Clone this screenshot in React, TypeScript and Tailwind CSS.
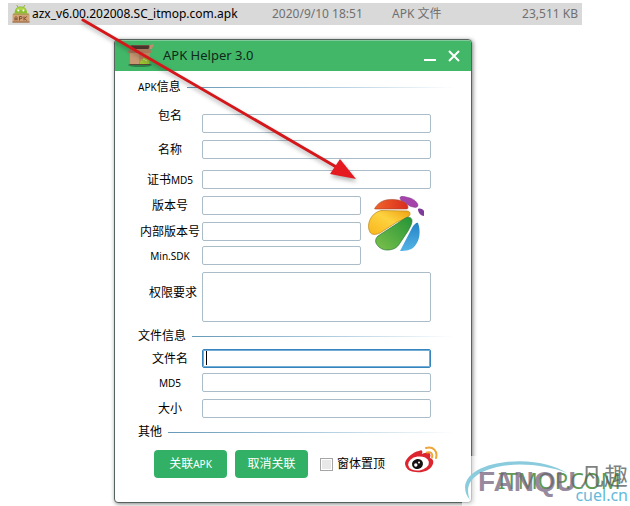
import type { ReactNode } from 'react';

function ApkFileIcon() {
  return (
    <svg width="18" height="18" viewBox="0 0 18 18" aria-hidden="true">
      <path d="M5 .5 6.200 2.400M12.600.5l-1.200 1.900" stroke="#8cab2e" strokeWidth="1" strokeLinecap="round" />
      <path d="M2.500 9C2.500 4 5 1.600 8.800 1.600S15.200 4 15.200 9z" fill="#8cc030" />
      <path d="M3.800 5C5 2.900 6.600 2.300 8.800 2.300s3.900.7 5 2.700z" fill="#b0d34b" />
      <circle cx="6.300" cy="5.500" r="1" fill="#fff" />
      <circle cx="11.400" cy="5.500" r="1" fill="#fff" />
      <path d="M1.500 8.500h15L17.500 10v7.500H.5V10z" fill="#d3a277" />
      <path d="M1.500 8.500h15l1 1.500H.5z" fill="#a9a052" />
      <path d="M.5 17h17" stroke="#92603b" />
      <path
        d="M3 15.500V12.500l1-1 1 1v3M3 14h2M7.500 15.500v-4H9c1.400 0 1.400 2.200 0 2.200H7.500M12 11.500v4M14.800 11.500 12.400 13.500l2.400 2"
        fill="none"
        stroke="#7c4f32"
        strokeWidth="1"
      />
    </svg>
  );
}

function BoxIcon() {
  return (
    <svg width="28" height="24" viewBox="0 0 28 24" aria-hidden="true">
      <ellipse cx="13" cy="21" rx="12" ry="2" fill="#2b8049" />
      <path d="M2 4 4 1h18l2 4z" fill="#714b3b" />
      <path d="M5 2h17l-1 3H4z" fill="#49342c" />
      <path d="M3 6h20v14l-2 1H4l-1-1z" fill="#b98863" />
      <path d="M3 6h9v15H4l-1-1z" fill="#c79872" />
      <path d="M0 9 3 5h20l2 4z" fill="#a9795a" />
      <path d="m22 5 1-4 4-1-2 5z" fill="#bb8e6d" />
      <path d="M3 20.500h20" stroke="#5c4636" />
      <path d="M13 20c0-3 1-5 3-5l2-2c3 0 5 3 4 7z" fill="#9ac331" />
      <path d="M16 15c2 0 2 2 4 2" stroke="#dceb91" fill="none" />
    </svg>
  );
}

function PetalLogo() {
  return (
    <svg width="58" height="58" viewBox="0 2 58 58" className="shrink-0" aria-hidden="true">
      <defs>
        <linearGradient id="red" x1="0" y1="0" x2="1" y2="0">
          <stop stopColor="#f0652c" />
          <stop offset="1" stopColor="#d92c1d" />
        </linearGradient>
        <linearGradient id="yellow" x1="0" y1="1" x2="1" y2="0">
          <stop stopColor="#f9b51d" />
          <stop offset=".55" stopColor="#fdd33f" />
          <stop offset="1" stopColor="#eea012" />
        </linearGradient>
        <linearGradient id="green" x1="0" y1="1" x2="1" y2="0">
          <stop stopColor="#7dc14b" />
          <stop offset="1" stopColor="#239437" />
        </linearGradient>
        <linearGradient id="blue" x1="0" y1="0" x2="0" y2="1">
          <stop stopColor="#2383c6" />
          <stop offset="1" stopColor="#55b4e5" />
        </linearGradient>
      </defs>
      <path d="M8 14C12 7 20 4 31 6c6 1 10 3 10 8 0 1-2 1-4 1H9c-1 0-2 0-1-1z" fill="url(#red)" stroke="#a54525" strokeWidth=".6" />
      <path
        d="M14 16.500 40 17c3 0 4 3 2 5-3 3-8 4-12 6L13 39c-4 2-9 2-10-1-4-6 0-19 11-21.500z"
        fill="url(#yellow)"
        stroke="#bc871a"
        strokeWidth=".7"
      />
      <path
        d="M11 42 37 25c4-3 8-2 8 2 0 3-2 6-4 10L33 49c-3 5-7 7-13 7-5 0-9-3-11-7-1-3 0-5 2-7z"
        fill="url(#green)"
        stroke="#287737"
        strokeWidth=".7"
      />
      <path d="M33 57 45 34c2-4 5-6 6-5 3 8 2 18-4 24-3 3-8 4-14 4z" fill="url(#blue)" />
      <path d="M33 4c0-2 3-2 6-1 6 1 11 4 12 8 0 2-2 3-5 2-3 0-6-3-8-5-3-1-5-2-5-4z" fill="#a444aa" stroke="#813886" strokeWidth=".5" />
      <path d="M51 15c2-1 5 0 6 2v5c-3 0-6-3-6-7z" fill="#7f3b98" />
    </svg>
  );
}

function WeiboIcon() {
  return (
    <svg width="34" height="28" viewBox="0 0 34 28" aria-hidden="true">
      <path
        d="M14 5c3-2 4 0 3 3 4-2 8-2 8 0 1 1 0 3 0 4 4 1 4 5 2 8-3 5-10 7-16 6C4 26 0 22 0 17 1 12 8 6 14 5z"
        fill="#dc252e"
      />
      <ellipse cx="13.500" cy="17.500" rx="10.500" ry="7" fill="#fff" transform="rotate(-8 13.500 17.500)" />
      <ellipse cx="12.500" cy="18" rx="5.500" ry="5" fill="#161212" transform="rotate(-15 12.500 18)" />
      <circle cx="10.800" cy="19" r="1.700" fill="#fff" />
      <circle cx="14" cy="16.500" r="1" fill="#fff" />
      <path d="M21 2c7-2 12 3 10 10M22 6.500c4-1 6 1 5 5" fill="none" stroke="#eea637" strokeWidth="2" strokeLinecap="round" />
    </svg>
  );
}

// Latin runs are set smaller than the Chinese beside them
function Latin({ children }: { children: ReactNode }) {
  return <span className="text-[10px]">{children}</span>;
}

function Section({ title, children }: { title: ReactNode; children: ReactNode }) {
  return (
    <section>
      <div className="flex h-5 items-center gap-1.5">
        <h2>{title}</h2>
        <div className="h-px flex-1 bg-gradient-to-r from-[#6699b5] via-[#a9c9dd] to-transparent" />
      </div>
      {children}
    </section>
  );
}

type FieldProps = { id: string; label: ReactNode; className?: string; labelClass?: string; focused?: boolean };

function Field({ id, label, className = '', labelClass = '', focused }: FieldProps) {
  const border = focused ? 'border-[#3584bd] ring-1 ring-inset ring-[#73add6]' : 'border-[#a9bcc8]';
  return (
    <div className={`flex items-center ${className}`}>
      <label htmlFor={id} className={`w-16 shrink-0 text-center whitespace-nowrap ${labelClass}`}>
        {label}
      </label>
      <div className="relative flex-1">
        <input id={id} className={`block h-[19px] w-full rounded-[2px] border bg-white px-1 outline-none ${border}`} />
        {focused && <span className="absolute top-0.5 left-1 h-3.5 w-px bg-black" />}
      </div>
    </div>
  );
}

function HelperWindow() {
  return (
    <div className="w-full max-w-[358px] overflow-hidden rounded-[4px] border border-[#56635c] bg-white shadow-[1px_1px_4px_rgba(0,0,0,0.5)]">
      <header className="flex h-[31px] items-center border-t border-[#80ca9a] bg-[#42b768] pr-[7px] pl-3">
        <BoxIcon />
        <h1 className="ml-2 flex-1 text-[13px] text-[#102a19]">APK Helper 3.0</h1>
        <button type="button" aria-label="Minimize" className="flex h-5 w-5 items-end justify-center">
          <svg width="14" height="8" viewBox="0 0 14 8">
            <path d="M1 2h12" stroke="#fff" strokeWidth="2" />
          </svg>
        </button>
        <button type="button" aria-label="Close" className="ml-1 flex h-5 w-5 items-center justify-center">
          <svg width="12" height="12" viewBox="0 0 12 12">
            <path d="m1 1 10 10M11 1 1 11" stroke="#fff" strokeWidth="2" />
          </svg>
        </button>
      </header>

      <form className="pt-1.5 pr-4 pb-5 pl-[23px] text-[12px] leading-[18px] text-black">
        <Section title={<><Latin>APK</Latin>信息</>}>
          <div className="pt-2.5 pr-6">
            <Field id="package" label="包名" className="h-[26px] items-end" labelClass="self-start" />
            <Field id="name" label="名称" className="mt-[7px]" />
            <Field id="cert" label={<>证书<Latin>MD5</Latin></>} className="mt-[11px]" />
            <div className="mt-[7px] flex gap-1.5">
              <div className="w-[223px]">
                <Field id="version" label="版本号" />
                <Field id="build" label="内部版本号" className="mt-[7px]" />
                <Field id="sdk" label={<Latin>Min.SDK</Latin>} className="mt-[5px]" />
              </div>
              <PetalLogo />
            </div>
            <div className="mt-[7px] flex items-center">
              <label htmlFor="permissions" className="w-16 shrink-0 pb-2 pl-1.5 text-center">
                权限要求
              </label>
              <textarea
                id="permissions"
                className="block h-[50px] flex-1 resize-none rounded-[2px] border border-[#a9bcc8] bg-white outline-none"
              />
            </div>
          </div>
        </Section>

        <div className="mt-1">
          <Section title="文件信息">
            <div className="pt-[3px] pr-6">
              <Field id="file" label="文件名" focused />
              <Field id="md5" label={<Latin>MD5</Latin>} className="mt-[5px]" />
              <Field id="size" label="大小" className="mt-[7px]" />
            </div>
          </Section>
        </div>

        <div className="mt-1">
          <Section title="其他">
            <div className="flex items-center pt-1 pl-4">
              <button type="button" className="h-7 w-[73px] rounded-[4px] bg-[#32b166] text-white">
                关联<Latin>APK</Latin>
              </button>
              <button type="button" className="ml-2 h-7 w-[73px] rounded-[4px] bg-[#32b166] text-white">
                取消关联
              </button>
              <label className="ml-3 flex items-center gap-1">
                <input
                  type="checkbox"
                  className="h-[13px] w-[13px] appearance-none border border-[#a5a5a5] bg-[#e8e8e8] shadow-[inset_0_0_0_1px_white]"
                />
                窗体置顶
              </label>
              <a href="#weibo" aria-label="Weibo" className="mb-2 ml-5">
                <WeiboIcon />
              </a>
            </div>
          </Section>
        </div>
      </form>
    </div>
  );
}

function Arrow() {
  return (
    <svg
      width="380"
      height="200"
      viewBox="0 0 380 200"
      className="pointer-events-none absolute top-0 left-0 drop-shadow-[1px_3px_2px_rgba(0,0,0,0.3)]"
      aria-hidden="true"
    >
      <path d="M83 20 338 168" stroke="#d4171b" strokeWidth="3" strokeLinecap="round" />
      <path d="m356 179-26-5 10-15z" fill="#e41a20" />
    </svg>
  );
}

function Watermark() {
  return (
    <div className="pointer-events-none absolute right-0 bottom-0 h-[50px] w-[168px] bg-white/60">
      <svg width="168" height="50" viewBox="0 0 168 50" className="absolute inset-0" aria-hidden="true">
        <path d="M8 44C-5 28 8 10 44 6c26-3 49 3 61 11C84 9 56 6 35 11 10 17 2 29 8 44z" fill="#8accdd" />
      </svg>
      <p className="absolute top-2.5 left-9 font-['Noto_Sans'] text-[22px] leading-7 text-[#5f9a55]">ITMOP.COM</p>
      <p className="absolute top-2.5 left-4 font-['Liberation_Sans'] text-[28px] leading-8 font-bold text-[#75637e]/75">
        FANQU
      </p>
      <p className="absolute top-1.5 right-0.5 text-[24px] leading-7 text-[#595e60]/80">凡趣</p>
      <p className="absolute right-0.5 bottom-0 font-['Noto_Sans'] text-[16px] leading-[22px] text-[#65badb]">cuel.cn</p>
    </div>
  );
}

export default function App() {
  return (
    <main className="relative min-h-screen overflow-hidden bg-white font-['Noto_Sans','Noto_Sans_CJK_SC',sans-serif]">
      <div className="px-2 pt-[3px]">
        <div className="flex h-[22px] w-full max-w-[574px] items-center bg-[#d9d9d9] px-1 text-[12px] text-[#707070]">
          <ApkFileIcon />
          <span className="ml-0.5 w-60 text-black">azx_v6.00.202008.SC_itmop.com.apk</span>
          <time className="w-30">2020/9/10 18:51</time>
          <span className="flex-1">APK 文件</span>
          <span>23,511 KB</span>
        </div>
      </div>
      <div className="pt-3.5 pl-[114px]">
        <HelperWindow />
      </div>
      <Arrow />
      <Watermark />
    </main>
  );
}
